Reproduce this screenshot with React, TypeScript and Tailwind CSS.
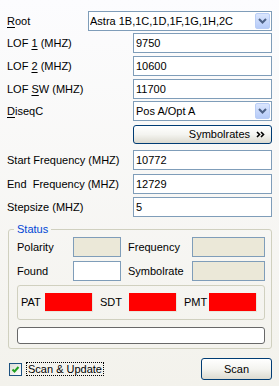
import React from "react";

const Mn = ({ children }: { children: React.ReactNode }) => (
  <span className="underline underline-offset-[2px] decoration-1">{children}</span>
);

const Chevron = () => (
  <svg width="9" height="6" viewBox="0 0 9 6">
    <path d="M1 1 L4.5 4.5 L8 1" fill="none" stroke="#4d6185" strokeWidth="2" />
  </svg>
);

const Combo = ({ value, className = "" }: { value: string; className?: string }) => (
  <div className={`flex items-center h-[20px] border border-[#7f9db9] bg-white ${className}`}>
    <span className="flex-1 whitespace-nowrap overflow-hidden">{value}</span>
    <div className="flex items-center justify-center w-[15px] h-[16px] mr-[1px] rounded-[2px] border border-[#b9cdf6] bg-gradient-to-b from-[#dbe6fd] to-[#b6cbf8]">
      <Chevron />
    </div>
  </div>
);

const TextBox = ({ value }: { value: string }) => (
  <div className="flex items-center w-[139px] h-[20px] border border-[#7f9db9] bg-white pl-[2px]">
    {value}
  </div>
);

interface RowProps {
  label: React.ReactNode;
  children: React.ReactNode;
  className?: string;
}

const Row = ({ label, children, className = "" }: RowProps) => (
  <div className={`flex items-center justify-between h-[20px] ${className}`}>
    <span className="whitespace-pre">{label}</span>
    {children}
  </div>
);

const Led = () => (
  <div className="w-[48px] h-[19px] bg-[#ff0000] border-r border-b border-[#e8e6dc]" />
);

export default function App() {
  return (
    <div className="w-[279px] h-[386px] bg-gradient-to-b from-[#fcfcfe] to-[#f3f2ec] pl-[7px] pr-[7px] pt-[11px] text-[11px] leading-[13px] text-black font-['Liberation_Sans',Arial,sans-serif]">
      <Row label={<><Mn>R</Mn>oot</>}>
        <Combo value="Astra 1B,1C,1D,1F,1G,1H,2C" className="w-[184px] pl-[1px]" />
      </Row>
      <Row className="mt-[2px]" label={<>LOF <Mn>1</Mn> (MHZ)</>}>
        <TextBox value="9750" />
      </Row>
      <Row className="mt-[3px]" label={<>LOF <Mn>2</Mn> (MHZ)</>}>
        <TextBox value="10600" />
      </Row>
      <Row className="mt-[3px]" label={<>LOF <Mn>S</Mn>W (MHZ)</>}>
        <TextBox value="11700" />
      </Row>
      <Row className="mt-[2px]" label={<><Mn>D</Mn>iseqC</>}>
        <Combo value="Pos A/Opt A" className="w-[139px] pl-[2px]" />
      </Row>
      <div className="flex justify-end mt-[4px]">
        <button className="flex items-center justify-end w-[139px] h-[19px] rounded-[3px] border border-[#003c74] bg-gradient-to-b from-[#ffffff] via-[#f4f4f0] to-[#dcdad0] pr-[6px]">
          <span>Symbolrates</span>
          <svg width="9" height="7" viewBox="0 0 9 7" className="ml-[6px]">
            <path d="M1 1 L3.5 3.5 L1 6 M5 1 L7.5 3.5 L5 6" fill="none" stroke="#000" strokeWidth="1.6" />
          </svg>
        </button>
      </div>
      <Row className="mt-[6px]" label="Start Frequency (MHZ)">
        <TextBox value="10772" />
      </Row>
      <Row className="mt-[4px]" label="End  Frequency (MHZ)">
        <TextBox value="12729" />
      </Row>
      <Row className="mt-[3px]" label="Stepsize (MHZ)">
        <TextBox value="5" />
      </Row>

      <fieldset className="mt-[6px] ml-[1px] w-[264px] border border-[#d0d0bf] rounded-[3px] px-0 pb-[4px]">
        <legend className="ml-[5px] px-[3px] text-[#0046d5] leading-[13px]">Status</legend>
        <div className="pl-[8px] pr-[6px]">
          <div className="grid grid-cols-[56px_48px_71px_73px] grid-rows-[20px_20px] gap-y-[4px] items-center mt-[1px]">
            <span>Polarity</span>
            <div className="h-[20px] border border-[#7f9db9] bg-[#ebe8d8]" />
            <span className="pl-[7px]">Frequency</span>
            <div className="h-[20px] border border-[#7f9db9] bg-[#ebe8d8]" />
            <span>Found</span>
            <div className="h-[20px] border border-[#7f9db9] bg-white" />
            <span className="pl-[7px]">Symbolrate</span>
            <div className="h-[20px] border border-[#7f9db9] bg-[#ebe8d8]" />
          </div>
          <div className="flex items-center h-[35px] mt-[4px] border border-[#d0d0bf] rounded-[3px] pl-[3px]">
            <span className="w-[24px]">PAT</span>
            <Led />
            <span className="w-[36px] pl-[7px]">SDT</span>
            <Led />
            <span className="w-[32px] pl-[7px]">PMT</span>
            <Led />
          </div>
          <div className="mt-[7px] h-[17px] rounded-[3px] border border-[#686868] bg-white" />
        </div>
      </fieldset>

      <div className="flex items-center justify-between h-[22px] mt-[9px]">
        <div className="flex items-center ml-[2px]">
          <div className="flex items-center justify-center w-[13px] h-[13px] border border-[#1c5180] bg-gradient-to-br from-[#dcdcd7] to-white">
            <svg width="9" height="9" viewBox="0 0 9 9">
              <path d="M1.5 4.5 L3.5 6.5 L7.5 2" fill="none" stroke="#21a121" strokeWidth="2" />
            </svg>
          </div>
          <span className="ml-[4px] px-[1px] border border-dotted border-black leading-[12px]">Scan &amp; Update</span>
        </div>
        <button className="w-[71px] h-[22px] rounded-[3px] border border-[#003c74] bg-gradient-to-b from-[#ffffff] via-[#f4f4f0] to-[#dcdad0]">
          Scan
        </button>
      </div>
    </div>
  );
}
